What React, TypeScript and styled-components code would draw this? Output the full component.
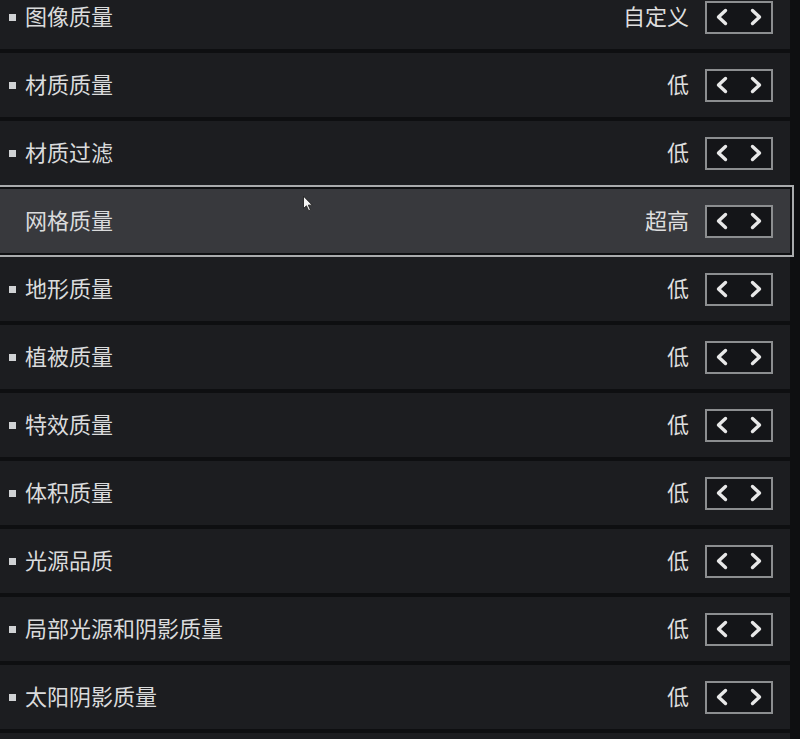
import styled, { createGlobalStyle } from 'styled-components';

const GlobalStyle = createGlobalStyle`
  html, body {
    margin: 0;
    padding: 0;
    background: #0e0f11;
    overflow: hidden;
  }
  body {
    font-family: "Noto Sans CJK SC", "Noto Sans", sans-serif;
  }
`;

type Setting = { label: string; value: string; active?: boolean };

const settings: Setting[] = [
  { label: '图像质量', value: '自定义' },
  { label: '材质质量', value: '低' },
  { label: '材质过滤', value: '低' },
  { label: '网格质量', value: '超高', active: true },
  { label: '地形质量', value: '低' },
  { label: '植被质量', value: '低' },
  { label: '特效质量', value: '低' },
  { label: '体积质量', value: '低' },
  { label: '光源品质', value: '低' },
  { label: '局部光源和阴影质量', value: '低' },
  { label: '太阳阴影质量', value: '低' },
];

function Chevron({ dir }: { dir: 'left' | 'right' }) {
  return (
    <svg width="14" height="18" viewBox="0 0 14 18">
      <polyline
        points={dir === 'left' ? '10.5,2.5 3.5,9 10.5,15.5' : '3.5,2.5 10.5,9 3.5,15.5'}
        fill="none"
        stroke="#e8e8e8"
        strokeWidth="3.4"
        strokeLinecap="round"
        strokeLinejoin="round"
      />
    </svg>
  );
}

function Cursor() {
  return (
    <svg width="12" height="18" viewBox="0 0 10 16">
      <path d="M1 1 L1 12 L3.6 9.6 L5.6 14 L7.2 13.3 L5.3 9 L8.8 9 Z" fill="#f4f4f4" stroke="#222" strokeWidth="0.8" />
    </svg>
  );
}

export default function App() {
  return (
    <>
      <GlobalStyle />
      <Page>
        <List>
          {settings.map((s) => (
            <Row key={s.label} $active={s.active}>
              <Bullet $hidden={s.active} />
              <Label>{s.label}</Label>
              <Value>{s.value}</Value>
              <Switcher>
                <Chevron dir="left" />
                <Chevron dir="right" />
              </Switcher>
              {s.active && (
                <Pointer>
                  <Cursor />
                </Pointer>
              )}
            </Row>
          ))}
          <Row />
        </List>
      </Page>
    </>
  );
}

const Page = styled.div`
  width: 800px;
  height: 739px;
  overflow: hidden;
  background: #0e0f11;
`;

const List = styled.div`
  width: 790px;
  display: flex;
  flex-direction: column;
  gap: 4px;
  margin-top: -15px;
`;

const Row = styled.div<{ $active?: boolean }>`
  position: relative;
  height: 64px;
  flex-shrink: 0;
  display: flex;
  align-items: center;
  padding: 0 17px 0 9px;
  background: ${(p) => (p.$active ? '#38393d' : '#1c1d20')};
  outline: ${(p) => (p.$active ? '2px solid #a9abad' : 'none')};
  outline-offset: 2px;
`;

const Bullet = styled.span<{ $hidden?: boolean }>`
  width: 7px;
  height: 7px;
  background: #d0d2d4;
  margin-right: 9px;
  visibility: ${(p) => (p.$hidden ? 'hidden' : 'visible')};
`;

const Label = styled.span`
  flex: 1;
  font-size: 22px;
  color: #dadbdc;
  line-height: 1;
  margin-bottom: 4px;
`;

const Value = styled.span`
  font-size: 22px;
  color: #dedede;
  line-height: 1;
  margin-right: 16px;
  margin-bottom: 4px;
`;

const Switcher = styled.div`
  width: 68px;
  height: 33px;
  box-sizing: border-box;
  border: 2px solid #8c8e90;
  background: #141518;
  display: flex;
  align-items: center;
  justify-content: space-between;
  padding: 0 8px;
`;

const Pointer = styled.div`
  position: absolute;
  left: 302px;
  top: 6px;
  line-height: 0;
`;
